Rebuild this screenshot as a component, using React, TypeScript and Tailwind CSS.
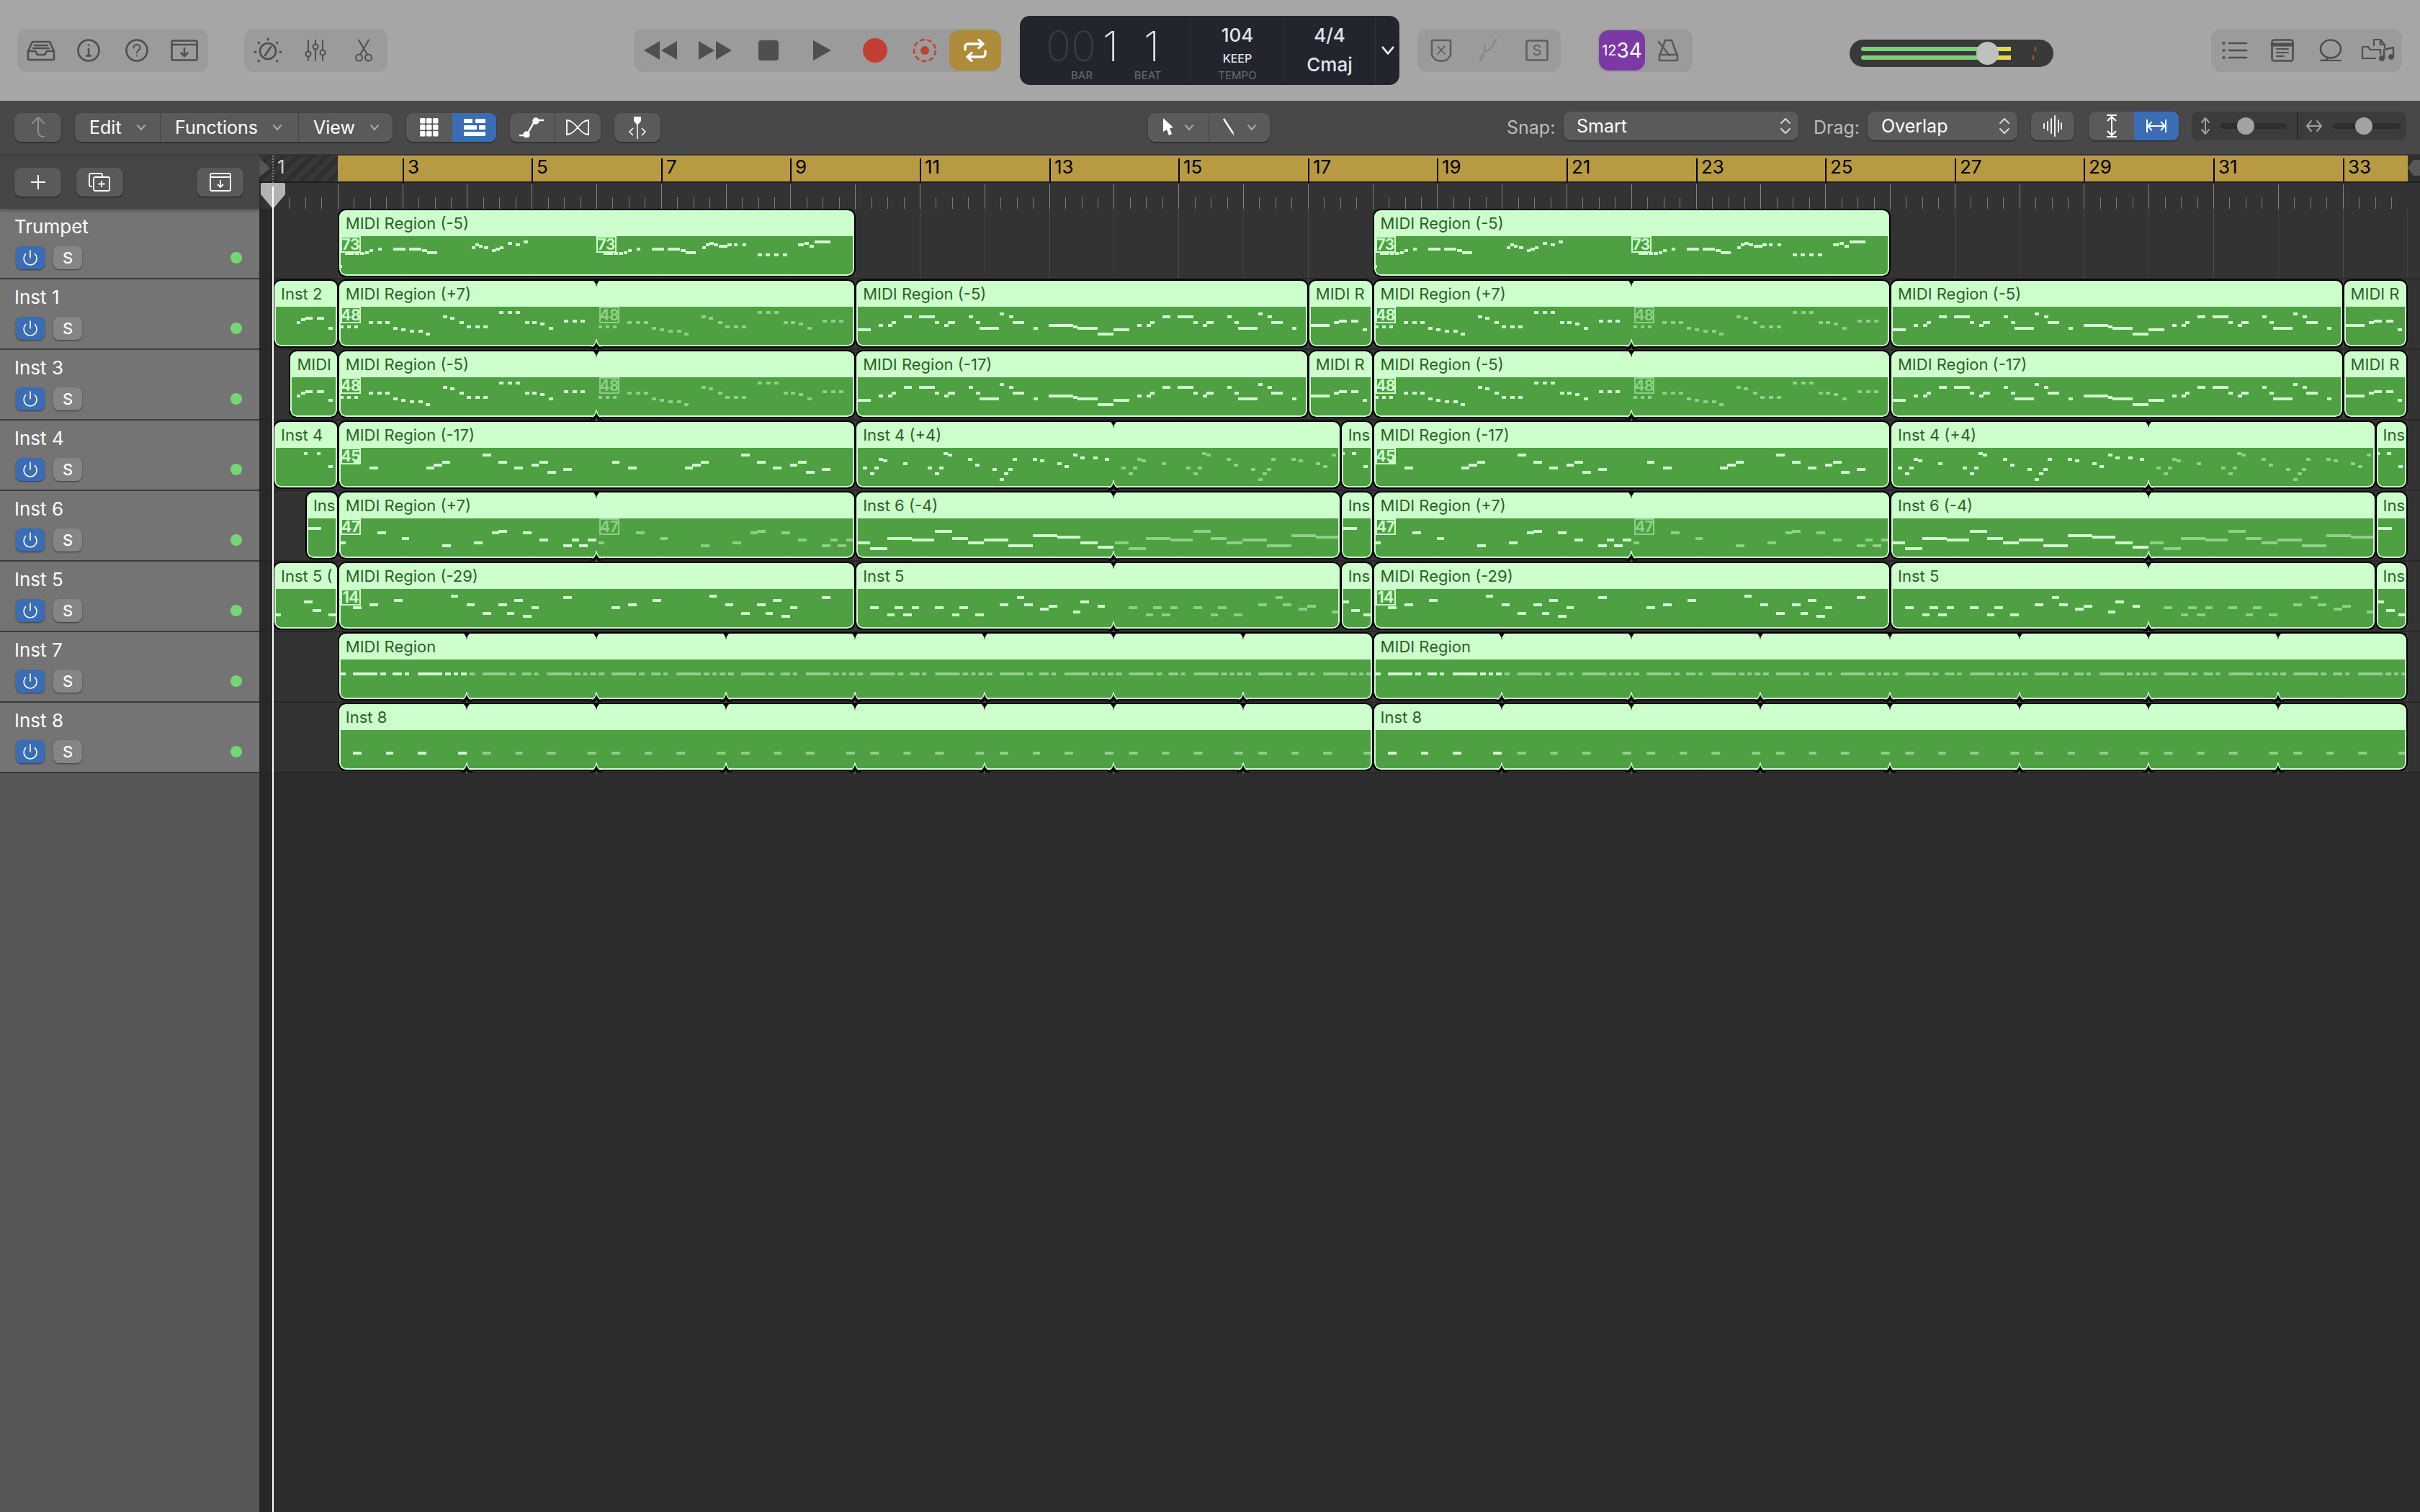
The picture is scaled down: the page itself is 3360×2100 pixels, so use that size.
import React from "react";
import { Power } from "lucide-react";

type Note = [number, number, number]; // x, width, y centre inside the region body

interface Region {
  s: number;
  e: number;
  label: string;
  notes?: Note[];
  period?: number;
  fade?: boolean;
  loop?: boolean;
  pitch?: string;
  pitchTwice?: boolean;
}

const BAR = 89.8;
const barX = (b: number) => 19 + (b - 1) * BAR;

const DOTS: Note[] = [
  [3, 5, 28], [13, 5, 28], [23, 5, 28], [43, 6, 22], [55, 6, 22], [66, 6, 22], [77, 6, 30], [88, 6, 32],
  [100, 6, 34], [112, 6, 34], [122, 6, 38], [146, 6, 14], [156, 6, 16], [169, 6, 22], [179, 6, 28],
  [191, 6, 28], [202, 6, 28], [224, 6, 8], [236, 6, 8], [247, 6, 8], [260, 6, 22], [270, 6, 22],
  [281, 6, 24], [293, 6, 30], [314, 6, 20], [326, 6, 20], [337, 6, 20],
];
const LONG: Note[] = [
  [0, 22, 32], [33, 6, 26], [46, 6, 26], [51, 6, 22], [68, 11, 14], [89, 22, 14], [111, 6, 22], [124, 6, 26],
  [129, 10, 22], [158, 6, 14], [168, 6, 22], [173, 27, 30], [201, 6, 10], [214, 6, 14], [219, 16, 22],
  [248, 6, 30], [269, 34, 26], [303, 6, 28], [309, 28, 30], [337, 22, 38],
];
const MINUS17: Note[] = [
  [22, 10, 20], [44, 12, 28], [123, 11, 28], [133, 12, 24], [145, 11, 20], [201, 12, 10], [223, 12, 20],
  [245, 12, 28], [269, 10, 24], [280, 12, 20], [291, 12, 34], [313, 12, 30],
];
const PLUS7: Note[] = [
  [3, 8, 34], [55, 12, 20], [89, 10, 28], [145, 12, 38], [189, 12, 34], [214, 10, 20], [223, 12, 18],
  [257, 12, 20], [280, 12, 30], [313, 12, 38], [325, 10, 30], [335, 12, 38], [347, 12, 30],
];
const MINUS29: Note[] = [
  [21, 12, 26], [44, 12, 22], [78, 12, 16], [157, 10, 10], [179, 11, 22], [201, 12, 34], [223, 12, 22],
  [235, 10, 34], [245, 12, 16], [257, 12, 38], [269, 10, 26], [313, 12, 12],
];
const INST4: Note[] = [
  [11, 6, 28], [27, 6, 28], [21, 6, 36], [33, 6, 16], [39, 6, 18], [67, 6, 22], [101, 6, 28], [117, 6, 28],
  [111, 6, 36], [123, 6, 8], [129, 6, 10], [157, 6, 16], [167, 6, 24], [191, 6, 30], [207, 6, 36],
  [213, 6, 30], [201, 6, 44], [219, 6, 16], [247, 6, 16], [257, 6, 18], [281, 6, 22], [291, 6, 26],
  [303, 6, 10], [313, 6, 14], [331, 6, 14], [347, 6, 16],
];
const INST6: Note[] = [
  [2, 19, 34], [21, 24, 42], [45, 34, 28], [79, 31, 30], [111, 24, 18], [135, 22, 28], [157, 22, 34],
  [179, 34, 30], [213, 34, 38], [247, 34, 24], [281, 32, 26], [313, 24, 34], [337, 22, 40],
];
const INST5: Note[] = [
  [21, 12, 26], [45, 10, 36], [55, 12, 26], [67, 12, 36], [79, 10, 26], [111, 12, 26], [135, 10, 36],
  [145, 12, 26], [167, 12, 36], [201, 12, 22], [225, 10, 12], [235, 12, 22], [257, 12, 28], [269, 12, 24],
  [303, 10, 32], [313, 12, 18], [337, 10, 24],
];
const TRUMPET_HEAD: Note[] = [
  [10, 7, 24], [17, 6, 24], [24, 6, 24], [31, 6, 24], [38, 5, 23], [44, 5, 20], [56, 5, 18], [77, 17, 18],
  [99, 17, 18], [117, 7, 20], [124, 14, 23],
];
const TRUMPET: Note[] = [
  [3, 3, 42], ...TRUMPET_HEAD,
  [186, 5, 16], [191, 5, 12], [196, 5, 14], [203, 6, 16], [214, 5, 20], [219, 6, 18], [225, 5, 16],
  [236, 6, 10], [247, 6, 12], [258, 6, 8],
  ...TRUMPET_HEAD.map(([x, w, y]): Note => [x + 359, w, y]),
  [506, 5, 16], [511, 5, 12], [516, 6, 10], [522, 6, 12], [529, 12, 14], [541, 6, 12], [550, 5, 12],
  [562, 5, 12], [583, 6, 26], [594, 6, 26], [606, 6, 26], [618, 6, 26], [639, 8, 12], [648, 6, 10],
  [655, 6, 14], [662, 22, 8],
];
const SEVEN: Note[] = [[3, 8, 20], [21, 34, 20], [59, 8, 20], [76, 13, 20], [93, 6, 20], [111, 34, 20], [149, 8, 20], [161, 6, 20], [171, 8, 20]];
const EIGHT: Note[] = [[21, 12, 32], [67, 10, 32], [111, 12, 32], [167, 12, 32]];
const TAIL: Note[] = [[3, 27, 26], [36, 7, 22], [43, 11, 20], [60, 10, 20], [76, 6, 32]];
const FOUR_TAIL: Note[] = [[3, 3, 8], [16, 6, 8], [32, 6, 26]];
const FIVE_TAIL: Note[] = [[3, 9, 18], [15, 12, 30], [32, 10, 36]];

// every row plays the same arrangement twice, 16 bars apart
const pair = (list: Region[]): Region[] => [...list, ...list.map((r) => ({ ...r, s: r.s + 16, e: r.e + 16 }))];

const tracks: { name: string; regions: Region[] }[] = [
  {
    name: "Trumpet",
    regions: pair([{ s: 2, e: 10, label: "MIDI Region (-5)", notes: TRUMPET, pitch: "73", pitchTwice: true }]),
  },
  {
    name: "Inst 1",
    regions: [
      { s: 1, e: 2, label: "Inst 2", notes: [[33, 5, 22], [39, 6, 18], [45, 10, 16], [61, 10, 16], [77, 6, 30]] },
      ...pair([
        { s: 2, e: 10, label: "MIDI Region (+7)", notes: DOTS, period: 359, fade: true, loop: true, pitch: "48" },
        { s: 10, e: 17, label: "MIDI Region (-5)", notes: LONG, period: 359 },
        { s: 17, e: 18, label: "MIDI R", notes: TAIL },
      ]),
    ],
  },
  {
    name: "Inst 3",
    regions: [
      { s: 1.25, e: 2, label: "MIDI", notes: [[11, 5, 26], [17, 6, 22], [23, 10, 20], [39, 10, 20], [55, 6, 32]] },
      ...pair([
        { s: 2, e: 10, label: "MIDI Region (-5)", notes: DOTS, period: 359, fade: true, loop: true, pitch: "48" },
        { s: 10, e: 17, label: "MIDI Region (-17)", notes: LONG, period: 359 },
        { s: 17, e: 18, label: "MIDI R", notes: TAIL },
      ]),
    ],
  },
  {
    name: "Inst 4",
    regions: [
      { s: 1, e: 2, label: "Inst 4", notes: [[43, 5, 8], [61, 5, 8], [77, 6, 26]] },
      ...pair([
        { s: 2, e: 10, label: "MIDI Region (-17)", notes: MINUS17, period: 359, pitch: "45" },
        { s: 10, e: 17.5, label: "Inst 4 (+4)", notes: INST4, period: 359, fade: true, loop: true },
        { s: 17.5, e: 18, label: "Ins", notes: FOUR_TAIL },
      ]),
    ],
  },
  {
    name: "Inst 6",
    regions: [
      { s: 1.5, e: 2, label: "Ins", notes: [[2, 20, 14]] },
      ...pair([
        { s: 2, e: 10, label: "MIDI Region (+7)", notes: PLUS7, period: 359, fade: true, loop: true, pitch: "47" },
        { s: 10, e: 17.5, label: "Inst 6 (-4)", notes: INST6, period: 359, fade: true, loop: true },
        { s: 17.5, e: 18, label: "Ins", notes: [[3, 20, 14]] },
      ]),
    ],
  },
  {
    name: "Inst 5",
    regions: [
      { s: 1, e: 2, label: "Inst 5 (", notes: [[3, 8, 36], [43, 12, 18], [55, 12, 30], [77, 10, 36]] },
      ...pair([
        { s: 2, e: 10, label: "MIDI Region (-29)", notes: MINUS29, period: 359, pitch: "14" },
        { s: 10, e: 17.5, label: "Inst 5", notes: INST5, period: 359, fade: true, loop: true },
        { s: 17.5, e: 18, label: "Ins", notes: FIVE_TAIL },
      ]),
    ],
  },
  { name: "Inst 7", regions: pair([{ s: 2, e: 18, label: "MIDI Region", notes: SEVEN, period: 179.6, fade: true, loop: true }]) },
  { name: "Inst 8", regions: pair([{ s: 2, e: 18, label: "Inst 8", notes: EIGHT, period: 179.6, fade: true, loop: true }]) },
];

const ink = "#4f4f4f";

const Ico: React.FC<{ w: number; h: number; children: React.ReactNode; color?: string; vb?: string }> = ({ w, h, children, color = ink, vb }) => (
  <svg width={w} height={h} viewBox={vb || `0 0 ${w} ${h}`} fill="none" stroke={color} strokeWidth={2.6} strokeLinecap="round" strokeLinejoin="round">
    {children}
  </svg>
);

// equal slots, so each icon sits at the centre of its own cell
const Group: React.FC<{ className: string; children: React.ReactNode }> = ({ className, children }) => (
  <div className={`h-[60px] rounded-[14px] bg-[#9b9b9b] grid grid-flow-col auto-cols-fr items-center justify-items-center shrink-0 ${className}`}>{children}</div>
);

const Strip: React.FC<{ className: string; children: React.ReactNode }> = ({ className, children }) => (
  <div className={`h-[60px] rounded-[14px] bg-[#9b9b9b] flex items-center shrink-0 ${className}`}>{children}</div>
);

const Chevron: React.FC<{ color?: string; size?: number }> = ({ color = "#a8a8a8", size = 14 }) => (
  <svg width={size} height={(size * 10) / 14} viewBox="0 0 14 10" fill="none" stroke={color} strokeWidth="2" strokeLinecap="round" strokeLinejoin="round">
    <path d="M2 2l5 6 5-6" />
  </svg>
);

const UpDown = () => (
  <svg width="16" height="24" viewBox="0 0 16 24" fill="none" stroke="#d8d8d8" strokeWidth="2" strokeLinecap="round" strokeLinejoin="round">
    <path d="M2 8l6-6 6 6M2 16l6 6 6-6" />
  </svg>
);

function TopBar() {
  return (
    <div className="h-[140px] shrink-0 bg-[#a6a6a6] flex items-center">
      <Group className="ml-[24px] w-[265px]">
        <Ico w={40} h={30}>
          <path d="M2 16l6-13h24l6 13v10a2 2 0 0 1-2 2H4a2 2 0 0 1-2-2z" />
          <path d="M2 16h10l3 5h10l3-5h10M11 8h18M9 12h22" />
        </Ico>
        <Ico w={32} h={32}>
          <circle cx="16" cy="16" r="14.5" />
          <path d="M16 14v9M13 23.5h6M16 8.5v.5" />
        </Ico>
        <Ico w={34} h={32}>
          <circle cx="17" cy="16" r="14.5" />
          <path d="M12.5 12.5c0-6 9-6 9 0 0 3-4.500 3.500-4.500 7M17 23.500v.3" strokeWidth="2" />
        </Ico>
        <Ico w={38} h={30}>
          <rect x="1.500" y="1.500" width="35" height="27" rx="2" />
          <path d="M2 7h34M19 12v11M14.500 18.500l4.500 4.500 4.500-4.500" />
        </Ico>
      </Group>
      <Group className="ml-[50px] w-[199px]">
        <Ico w={40} h={36}>
          <circle cx="20" cy="19" r="11" />
          <path d="M24 13l-8 12" />
          <path d="M20 2v1M7 7l.7.7M33 7l-.7.7M2 20h1M37 20h1M7 33l.7-.7M33 33l-.7-.7" strokeWidth="3" />
        </Ico>
        <Ico w={30} h={32}>
          <path d="M5 2v28M15 2v28M25 2v28" strokeWidth="2" />
          <circle cx="5" cy="21" r="3.500" fill="#9b9b9b" strokeWidth="2" />
          <circle cx="15" cy="11" r="3.500" fill="#9b9b9b" strokeWidth="2" />
          <circle cx="25" cy="19" r="3.500" fill="#9b9b9b" strokeWidth="2" />
        </Ico>
        <Ico w={26} h={32}>
          <circle cx="6.500" cy="26" r="4.500" strokeWidth="2" />
          <circle cx="19.500" cy="26" r="4.500" strokeWidth="2" />
          <path d="M8 22L20 1.500M18 22L6 1.500" strokeWidth="2" />
        </Ico>
      </Group>
      <Strip className="ml-[342px] w-[510px]">
        <div className="w-[73px] flex justify-center">
          <svg width="46" height="26" viewBox="0 0 46 26" fill={ink}><path d="M0 13L22 0v26zM24 13L46 0v26z" /></svg>
        </div>
        <div className="w-[79px] flex justify-center">
          <svg width="46" height="26" viewBox="0 0 46 26" fill={ink}><path d="M46 13L24 0v26zM22 13L0 0v26z" /></svg>
        </div>
        <div className="w-[70px] flex justify-center"><div className="w-[28px] h-[28px] rounded-[4px] bg-[#4f4f4f]" /></div>
        <div className="w-[78px] flex justify-center">
          <svg width="25" height="28" viewBox="0 0 25 28" fill={ink}><path d="M0 0l25 14L0 28z" /></svg>
        </div>
        <div className="w-[70px] flex justify-center"><div className="w-[34px] h-[34px] rounded-full bg-[#c23f33]" /></div>
        <div className="w-[68px] flex justify-center">
          <svg width="34" height="34" viewBox="0 0 34 34" fill="none">
            <circle cx="17" cy="17" r="15" stroke="#c23f33" strokeWidth="2.400" strokeDasharray="7 3.500" />
            <circle cx="17" cy="17" r="6" fill="#c23f33" />
          </svg>
        </div>
        <div className="w-[72px] h-[56px] rounded-[14px] bg-[#ad8b3a] flex items-center justify-center">
          <svg width="36" height="32" viewBox="0 0 36 32" fill="none" stroke="#fff" strokeWidth="3.400" strokeLinecap="round" strokeLinejoin="round">
            <path d="M4 15V11a4 4 0 0 1 4-4h20M23 1.500L29 7l-6 5.500" />
            <path d="M32 17v4a4 4 0 0 1-4 4H8M13 19.500L7 25l6 5.500" />
          </svg>
        </div>
      </Strip>
      <div className="ml-[26px] w-[527px] h-[96px] rounded-[14px] bg-[#23252d] flex shrink-0 text-[#dfe4ee]">
        <div className="w-[238px] flex flex-col border-r border-[#2e3039]">
          <div className="h-[64px] mt-[10px] flex items-center text-[58px] font-extralight leading-none">
            <span className="ml-[36px] text-[#383b46]">00</span>
            <span className="ml-[9px] w-[40px]">1</span>
            <span className="ml-[17px]">1</span>
          </div>
          <div className="flex text-[15px] text-[#666b79] leading-none mt-[1px]">
            <span className="ml-[71px]">BAR</span>
            <span className="ml-[58px]">BEAT</span>
          </div>
        </div>
        <div className="w-[129px] flex flex-col items-center border-r border-[#2e3039] leading-none">
          <span className="text-[26px] font-medium mt-[14px]">104</span>
          <span className="text-[16px] font-medium mt-[11px]">KEEP</span>
          <span className="text-[15px] text-[#666b79] mt-[8px]">TEMPO</span>
        </div>
        <div className="w-[127px] flex flex-col items-center border-r border-[#2e3039] leading-none">
          <span className="text-[26px] font-medium mt-[14px]">4/4</span>
          <span className="text-[26px] font-medium mt-[15px]">Cmaj</span>
        </div>
        <div className="flex-1 flex items-center justify-center">
          <Chevron color="#dfe4ee" size={20} />
        </div>
      </div>
      <Group className="ml-[25px] w-[199px]">
        <Ico w={30} h={32} color="#5f5f5f">
          <path d="M2 2h26v21l-5 6c-5 2-11 2-16 0l-5-6z" />
          <path d="M10 10l10 11M20 10L10 21" strokeWidth="1.800" />
        </Ico>
        <Ico w={30} h={34} color="#8a8a8a">
          <path d="M3 31l7-13" strokeWidth="3.400" />
          <path d="M10 18c-2-2-1-5 0-8M10 18c4 0 7-3 9-6l6-10" strokeWidth="2.800" />
        </Ico>
        <Ico w={32} h={30} color="#5f5f5f">
          <rect x="1.500" y="1.500" width="29" height="27" rx="2" />
          <text x="16" y="22" textAnchor="middle" fontSize="20" fill="#5f5f5f" stroke="none" fontFamily="Inter, sans-serif">S</text>
        </Ico>
      </Group>
      <Strip className="ml-[51px] w-[132px]">
        <div className="ml-[2px] w-[64px] h-[56px] rounded-[14px] bg-[#7c39a5] text-white flex items-center justify-center leading-none">
          <span className="text-[20px]">12</span>
          <span className="text-[28px]">34</span>
        </div>
        <div className="ml-[16px]">
          <Ico w={34} h={32} color="#5a5a5a">
            <path d="M12 2h9l8 22v6H4v-6z" />
            <path d="M4 22h25M3 4l15 19" />
          </Ico>
        </div>
      </Strip>
      <div className="ml-[218px] w-[283px] h-[38px] mt-[8px] rounded-full bg-[#393939] relative shrink-0 flex flex-col justify-center gap-[6px] pl-[16px]">
        <div className="w-[208px] h-[6px] flex rounded-l-full overflow-hidden">
          <div className="w-[180px] bg-[#7bd27a]" />
          <div className="flex-1 bg-[#e6d94a]" />
        </div>
        <div className="w-[208px] h-[6px] flex rounded-l-full overflow-hidden">
          <div className="w-[180px] bg-[#7bd27a]" />
          <div className="flex-1 bg-[#e6d94a]" />
        </div>
        <div className="absolute left-[176px] top-[3px] w-[31px] h-[32px] rounded-full bg-[#bfc1bf]" />
        <div className="absolute left-[257px] top-[10px] w-[2px] h-[6px] bg-[#b5553c]" />
        <div className="absolute left-[254px] top-[22px] w-[2px] h-[6px] bg-[#b5553c]" />
      </div>
      <Group className="ml-[219px] w-[265px]">
        <Ico w={36} h={26}>
          <path d="M10 3h24M10 13h24M10 23h24" />
          <path d="M2 3h1M2 13h1M2 23h1" strokeWidth="3.400" />
        </Ico>
        <Ico w={32} h={32}>
          <rect x="1.500" y="1.500" width="29" height="29" rx="3" />
          <path d="M2 8h28" strokeWidth="5" />
          <path d="M8 14h16M8 19h16M8 24h10" strokeWidth="2" />
        </Ico>
        <Ico w={36} h={32}>
          <ellipse cx="18" cy="14" rx="14" ry="12.500" />
          <path d="M14 27c-2 3-7 3-10 3h28" strokeWidth="2.200" />
        </Ico>
        <Ico w={48} h={34}>
          <path d="M2 12h8l3 4h14v6M2 12v16h18" strokeWidth="2.200" />
          <path d="M18 10V2h9l6 7v4M27 2v7h6" strokeWidth="2.200" />
          <path d="M32 28V16l13-3v13" strokeWidth="2.400" />
          <circle cx="29" cy="28" r="3.500" fill={ink} strokeWidth="1" />
          <circle cx="42" cy="26" r="3.500" fill={ink} strokeWidth="1" />
        </Ico>
      </Group>
    </div>
  );
}

const btn = "bg-[#5a5a5a] shadow-[0_1px_2px_rgba(0,0,0,0.55)] rounded-[9px] h-[40px] flex items-center shrink-0";

const Menu: React.FC<{ label: string; w: string; gap: string; border?: boolean }> = ({ label, w, gap, border }) => (
  <div className={`${w} h-full flex items-center pl-[20px] ${border ? "border-r border-[#444]" : ""}`}>
    <span className={`${gap} text-white`}>{label}</span>
    <Chevron />
  </div>
);

function ToolBar() {
  return (
    <div className="h-[74px] shrink-0 bg-[#484848] flex items-center text-[25px] leading-none">
      <div className={`${btn} ml-[20px] w-[65px] justify-center`}>
        <svg width="24" height="32" viewBox="0 0 24 32" fill="none" stroke="#8f8f8f" strokeWidth="2" strokeLinecap="round" strokeLinejoin="round">
          <path d="M4 10l8-8 8 8M12 2v20c0 4 3 7 8 7" />
        </svg>
      </div>
      <div className={`${btn} ml-[19px] w-[441px]`}>
        <Menu label="Edit" w="w-[119px]" gap="mr-[20px]" border />
        <Menu label="Functions" w="w-[192px]" gap="mr-[20px]" border />
        <Menu label="View" w="w-[130px]" gap="mr-[20px]" />
      </div>
      <div className={`${btn} ml-[19px] w-[125px] overflow-hidden`}>
        <div className="w-[64px] flex justify-center">
          <svg width="26" height="26" viewBox="0 0 26 26" fill="#fff">
            {[0, 1, 2].map((r) => [0, 1, 2].map((c) => <rect key={`${r}${c}`} x={c * 9} y={r * 9} width="7.500" height="7.500" rx="1.500" />))}
          </svg>
        </div>
        <div className="flex-1 self-stretch bg-[#3a6db5] flex items-center justify-center">
          <svg width="30" height="24" viewBox="0 0 30 24" fill="#fff">
            <rect x="0" y="0" width="12" height="6" rx="1" />
            <rect x="16" y="0" width="14" height="6" rx="1" />
            <rect x="0" y="9" width="18" height="6" rx="1" />
            <rect x="21" y="9" width="9" height="6" rx="1" />
            <rect x="0" y="18" width="30" height="6" rx="1" />
          </svg>
        </div>
      </div>
      <div className={`${btn} ml-[19px] w-[126px]`}>
        <div className="w-[62px] h-full flex items-center justify-center border-r border-[#444]">
          <svg width="38" height="28" viewBox="0 0 38 28" fill="none" stroke="#fff" strokeWidth="2.400">
            <path d="M1 25h10l12-21h12" />
            <circle cx="11" cy="24" r="3.500" fill="#fff" />
            <circle cx="24" cy="5" r="3.500" fill="#fff" />
          </svg>
        </div>
        <div className="flex-1 flex items-center justify-center">
          <svg width="34" height="24" viewBox="0 0 34 24" fill="none" stroke="#fff" strokeWidth="1.800">
            <path d="M2 2v20c12 0 18-20 30-20v20C20 22 14 2 2 2z" />
          </svg>
        </div>
      </div>
      <div className={`${btn} ml-[19px] w-[64px] justify-center`}>
        <svg width="28" height="32" viewBox="0 0 28 32" fill="none" stroke="#fff" strokeWidth="1.500">
          <path d="M14 10v22" />
          <path d="M9 1h10v6l-5 6-5-6z" fill="#fff" stroke="none" />
          <path d="M8 17l-5 5 5 5M20 17l5 5-5 5" />
        </svg>
      </div>
      <div className={`${btn} ml-[677px] w-[169px]`}>
        <div className="w-[85px] h-full flex items-center justify-center gap-[14px] border-r border-[#444]">
          <svg width="16" height="26" viewBox="0 0 16 26" fill="#fff"><path d="M1 0l14 13-5 1 3 8-4 2-3-8-5 3z" /></svg>
          <Chevron />
        </div>
        <div className="flex-1 flex items-center justify-center gap-[14px]">
          <svg width="20" height="26" viewBox="0 0 20 26" fill="none" stroke="#fff" strokeWidth="2.400"><path d="M2 1l13 20" /><path d="M15 21l1 3" strokeWidth="1" /></svg>
          <Chevron />
        </div>
      </div>
      <span className="ml-[329px] w-[79px] text-[#bcbcbc]">Snap:</span>
      <div className={`${btn} w-[326px] pl-[18px] pr-[10px] justify-between -translate-y-[2px]`}>
        <span className="text-white">Smart</span>
        <UpDown />
      </div>
      <span className="ml-[21px] w-[75px] text-[#bcbcbc]">Drag:</span>
      <div className={`${btn} w-[208px] pl-[19px] pr-[10px] justify-between -translate-y-[2px]`}>
        <span className="text-white">Overlap</span>
        <UpDown />
      </div>
      <div className={`${btn} ml-[19px] w-[60px] justify-center -translate-y-[2px]`}>
        <svg width="28" height="30" viewBox="0 0 28 30" fill="none" stroke="#fff" strokeWidth="1.800" strokeLinecap="round">
          <path d="M2 12v6M7 9v12M12 5v20M17 1v28M22 7v16M26 11v8" />
        </svg>
      </div>
      <div className={`${btn} ml-[20px] w-[125px] overflow-hidden -translate-y-[2px]`}>
        <div className="w-[63px] flex justify-center">
          <svg width="18" height="34" viewBox="0 0 18 34" fill="none" stroke="#fff" strokeWidth="2">
            <path d="M2 2h14M2 32h14M9 3v28" />
            <path d="M3 10l6-6 6 6M3 24l6 6 6-6" />
          </svg>
        </div>
        <div className="flex-1 self-stretch bg-[#3a6db5] flex items-center justify-center">
          <svg width="30" height="20" viewBox="0 0 30 20" fill="none" stroke="#fff" strokeWidth="2">
            <path d="M2 1v18M28 1v18M3 10h24M9 4l-6 6 6 6M21 4l6 6-6 6" />
          </svg>
        </div>
      </div>
      <div className="ml-[18px] w-[298px] h-[40px] rounded-[9px] bg-[#3c3c3c] flex items-center shrink-0 -translate-y-[2px]">
        <div className="w-[148px] h-full flex items-center pl-[12px] gap-[14px] border-r-2 border-[#2a2a2a]">
          <svg width="14" height="26" viewBox="0 0 14 26" fill="none" stroke="#a0a0a0" strokeWidth="2" strokeLinecap="round" strokeLinejoin="round">
            <path d="M7 2v22M2 8l5-6 5 6M2 18l5 6 5-6" />
          </svg>
          <div className="relative w-[92px] h-[8px] rounded-full bg-[#2e2e2e]">
            <div className="absolute left-[23px] -top-[8px] w-[24px] h-[24px] rounded-full bg-[#a2a2a2]" />
          </div>
        </div>
        <div className="flex-1 h-full flex items-center pl-[10px] gap-[14px]">
          <svg width="24" height="20" viewBox="0 0 24 20" fill="none" stroke="#a0a0a0" strokeWidth="2" strokeLinecap="round" strokeLinejoin="round">
            <path d="M2 10h20M8 3l-6 7 6 7M16 3l6 7-6 7" />
          </svg>
          <div className="relative w-[94px] h-[8px] rounded-full bg-[#2e2e2e]">
            <div className="absolute left-[31px] -top-[8px] w-[24px] h-[24px] rounded-full bg-[#a2a2a2]" />
          </div>
        </div>
      </div>
    </div>
  );
}

const headBtn = "w-[65px] h-[40px] rounded-[9px] bg-[#5a5a5a] shadow-[0_1px_2px_rgba(0,0,0,0.55)] flex items-center justify-center shrink-0";

function TrackList() {
  return (
    <div className="w-[360px] shrink-0 flex flex-col bg-[#575757]">
      <div className="h-[76px] shrink-0 bg-[#464646] border-t-2 border-[#3c3c3c] flex items-center pl-[20px] shadow-[0_3px_4px_rgba(0,0,0,0.25)] z-10">
        <div className={headBtn}>
          <svg width="22" height="22" viewBox="0 0 22 22" stroke="#fff" strokeWidth="2"><path d="M11 1v20M1 11h20" /></svg>
        </div>
        <div className={`${headBtn} ml-[21px]`}>
          <svg width="32" height="26" viewBox="0 0 32 26" fill="none" stroke="#fff" strokeWidth="1.800">
            <path d="M5 19H3a2 2 0 0 1-2-2V3a2 2 0 0 1 2-2h14a2 2 0 0 1 2 2v2" />
            <rect x="7" y="6" width="22" height="19" rx="2" />
            <path d="M18 11v9M13.500 15.500h9" />
          </svg>
        </div>
        <div className={`${headBtn} ml-[102px]`}>
          <svg width="30" height="26" viewBox="0 0 30 26" fill="none" stroke="#fff" strokeWidth="1.800">
            <rect x="1" y="1" width="28" height="24" rx="2" />
            <path d="M1 6h28M15 10v10M11 16l4 4 4-4" />
          </svg>
        </div>
      </div>
      {tracks.map((t) => (
        <div key={t.name} className="h-[98px] shrink-0 bg-[#747474] border-b-2 border-[#3b3b3b] pl-[20px] flex flex-col">
          <span className="mt-[10px] h-[30px] text-[26px] leading-[30px] text-white">{t.name}</span>
          <div className="mt-[12px] flex items-center pr-[24px]">
            <div className="ml-[2px] w-[40px] h-[32px] rounded-[8px] bg-[#3a6db5] shadow-[0_1px_2px_rgba(0,0,0,0.5)] flex items-center justify-center">
              <Power size={24} color="#fff" strokeWidth={1.6} />
            </div>
            <div className="ml-[12px] w-[40px] h-[32px] rounded-[8px] bg-[#858585] shadow-[0_1px_2px_rgba(0,0,0,0.5)] flex items-center justify-center text-white text-[22px] font-medium">S</div>
            <div className="ml-auto w-[16px] h-[16px] rounded-full bg-[#75d676]" />
          </div>
        </div>
      ))}
    </div>
  );
}

const Notes: React.FC<{ r: Region; width: number }> = ({ r, width }) => {
  const copies: number[] = [];
  if (r.period) for (let k = 0; k * r.period < width; k++) copies.push(k);
  else copies.push(0);
  return (
    <svg className="absolute left-0 top-0" width={width} height={55} fill="#d2ffd0">
      <g transform="translate(-4,0)">
        {copies.map((k) => (
          <g key={k} opacity={r.fade && k > 0 ? 0.5 : 1}>
            {(r.notes || []).map(([x, w, y], i) => (
              <rect key={i} x={x + k * (r.period || 0)} y={y - 2} width={w} height={4} />
            ))}
          </g>
        ))}
      </g>
    </svg>
  );
};

const PitchBox: React.FC<{ text: string; x: number; faded?: boolean }> = ({ text, x, faded }) => (
  <div
    className="absolute top-0 h-[23px] w-[28px] border-2 border-[#ccffcc] text-[#ccffcc] text-[21px] leading-[19px] font-bold tracking-[-0.5px] flex justify-center"
    style={{ left: x, opacity: faded ? 0.5 : 1 }}
  >
    {text}
  </div>
);

const Notch: React.FC<{ x: number }> = ({ x }) => (
  <svg className="absolute top-0 z-10" style={{ left: x - 10 }} width="20" height="100" fill="#000">
    <path d="M1 0Q9 1 10 11Q11 1 19 0z" />
    <path d="M2 95Q9 92 10 83Q11 92 18 95z" stroke="#ccffcc" strokeWidth="1.500" />
    <path d="M2 95h16" stroke="#000" strokeWidth="3" />
    <path d="M10 94l2 3-2 3-2-3z" fill="#4a4a4a" />
  </svg>
);

const RegionBox: React.FC<{ r: Region }> = ({ r }) => {
  const width = (r.e - r.s) * BAR + 1;
  const bars: number[] = [];
  if (r.loop && r.period) for (let k = 1; k * r.period < width - 10; k++) bars.push(k * r.period);
  return (
    <div className="absolute top-0 h-[95px] rounded-[11px] bg-black p-[2px]" style={{ left: barX(r.s), width }}>
      <div className="h-full rounded-[9px] overflow-hidden flex flex-col">
        <div className="h-[36px] shrink-0 bg-[#ccffcc] text-[#2d5f28] text-[22px] leading-[36px] pl-[9px] whitespace-nowrap overflow-hidden">{r.label}</div>
        <div className="flex-1 relative bg-[#4ea042] border-x-2 border-b-2 border-[#ccffcc] rounded-b-[9px] overflow-hidden">
          <Notes r={r} width={width} />
          {r.pitch && <PitchBox text={r.pitch} x={0} />}
          {r.pitch && r.loop && r.period && <PitchBox text={r.pitch} x={r.period} faded />}
          {r.pitchTwice && <PitchBox text={r.pitch || ""} x={355} />}
        </div>
      </div>
      {bars.map((x) => (
        <Notch key={x} x={x} />
      ))}
    </div>
  );
};

const barNumbers = Array.from({ length: 16 }, (_, i) => 3 + i * 2);
const quarterTicks = Array.from({ length: 33 * 4 }, (_, i) => i);

function Ruler() {
  return (
    <div className="h-[76px] shrink-0 relative flex flex-col border-t-2 border-[#333]">
      <div className="h-[36px] shrink-0 flex">
        <div className="w-[109px] bg-[repeating-linear-gradient(135deg,#383838_0,#383838_7px,#2f2f2f_7px,#2f2f2f_14px)]" />
        <div className="flex-1 bg-[#b89a42]" />
        <div className="w-[17px] bg-[#2f2f2f]" />
      </div>
      <div className="h-[2px] shrink-0 bg-[#1f1f1f]" />
      <div className="flex-1 bg-[#333]" />
      <svg className="absolute left-0 top-0" width="3000" height="74">
        {quarterTicks.map((i) => {
          const x = Math.round(barX(1 + i / 4)) + 0.5;
          return i % 4 === 0 ? (
            <line key={i} x1={x} x2={x} y1="40" y2="74" stroke="#858585" strokeWidth="1" />
          ) : (
            <line key={i} x1={x} x2={x} y1="58" y2="74" stroke="#7a7a7a" strokeWidth="1" />
          );
        })}
        <line x1="19" x2="19" y1="0" y2="38" stroke="#bbb" strokeWidth="1" strokeDasharray="2 2" />
        <path d="M0 3l15 15L0 30z" fill="#575757" />
        <path d="M2983 17l8-11h9v22h-9z" fill="#575757" />
      </svg>
      <span className="absolute left-[25px] top-[1px] text-[26px] leading-[29px] text-[#cfcfcf]">1</span>
      {barNumbers.map((b) => (
        <div key={b} className="absolute top-[4px] h-[32px] border-l-2 border-black pl-[5px] text-[26px] leading-[23px] text-black" style={{ left: Math.round(barX(b)) }}>
          {b}
        </div>
      ))}
    </div>
  );
}

function Arrange() {
  return (
    <div className="flex-1 relative flex flex-col bg-[#2d2d2d]">
      <Ruler />
      <div className="relative bg-[#333333]">
        <svg className="absolute left-0 top-0" width="3000" height="784">
          {Array.from({ length: 34 }, (_, i) => (
            <line key={i} x1={Math.round(barX(i + 1)) + 0.5} x2={Math.round(barX(i + 1)) + 0.5} y1="0" y2="784" stroke={i % 2 === 0 ? "#4c4c4c" : "#3f3f3f"} />
          ))}
        </svg>
        {tracks.map((t) => (
          <div key={t.name} className="h-[98px] relative border-b-2 border-[#272727]">
            {t.regions.map((r) => (
              <RegionBox key={`${r.s}-${r.label}`} r={r} />
            ))}
          </div>
        ))}
      </div>
      {/* dark gutter and playhead sit on top of the lanes */}
      <div className="absolute left-0 top-[76px] bottom-0 w-[18px] bg-[#252525]/70" />
      <div className="absolute left-[18px] top-[40px] bottom-0 w-[2px] bg-white z-20" />
      <svg className="absolute left-[2px] top-[40px] z-20" width="34" height="36" viewBox="0 0 34 36">
        <path d="M2 0h30a2 2 0 0 1 2 2v14L18 35h-2L0 16V2a2 2 0 0 1 2-2z" fill="#b3b3b3" />
        <path d="M17 5v30" stroke="#fff" strokeWidth="2" />
      </svg>
    </div>
  );
}

export default function App() {
  return (
    <div className="w-[3360px] h-[2100px] overflow-hidden flex flex-col bg-[#2d2d2d] font-['Inter',sans-serif]">
      <TopBar />
      <ToolBar />
      <div className="flex-1 flex min-h-0">
        <TrackList />
        <Arrange />
      </div>
    </div>
  );
}
